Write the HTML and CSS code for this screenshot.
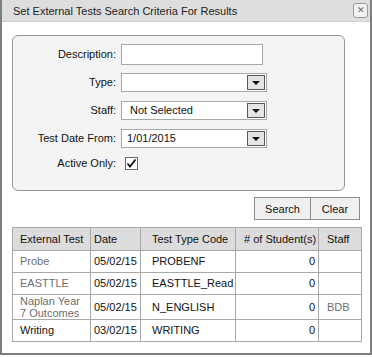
FILE: index.html
```html
<!DOCTYPE html>
<html lang="en">
<head>
    <meta charset="UTF-8">
    <title>Set External Tests Search Criteria For Results</title>
    <link rel="stylesheet" href="styles.css">
</head>
<body>
    <div class="dialog">
        <div class="title-bar">
            <span class="title">Set External Tests Search Criteria For Results</span>
            <span class="close-btn">&#x2715;</span>
        </div>

        <div class="dialog-body">
            <div class="criteria">
                <div class="field-row">
                    <label>Description:</label>
                    <div class="text-box"></div>
                </div>
                <div class="field-row">
                    <label>Type:</label>
                    <div class="combo"><span class="combo-text"></span><span class="combo-btn"><i></i></span></div>
                </div>
                <div class="field-row">
                    <label>Staff:</label>
                    <div class="combo"><span class="combo-text">Not Selected</span><span class="combo-btn"><i></i></span></div>
                </div>
                <div class="field-row">
                    <label>Test Date From:</label>
                    <div class="combo"><span class="combo-text date">1/01/2015</span><span class="combo-btn"><i></i></span></div>
                </div>
                <div class="field-row check-row">
                    <label>Active Only:</label>
                    <span class="check-box">
                        <svg width="11" height="11" viewBox="0 0 11 11"><path d="M1.5 5.5 L4 8.5 L9.5 1.5" fill="none" stroke="#111" stroke-width="1.8"/></svg>
                    </span>
                </div>
            </div>

            <div class="actions">
                <button class="btn btn-search">Search</button>
                <button class="btn btn-clear">Clear</button>
            </div>

            <table class="results">
                <colgroup>
                    <col style="width: 78px">
                    <col style="width: 50px">
                    <col style="width: 95px">
                    <col style="width: 83px">
                    <col style="width: 43px">
                </colgroup>
                <thead>
                    <tr>
                        <th>External Test</th>
                        <th>Date</th>
                        <th>Test Type Code</th>
                        <th># of Student(s)</th>
                        <th>Staff</th>
                    </tr>
                </thead>
                <tbody>
                    <tr class="muted">
                        <td>Probe</td>
                        <td>05/02/15</td>
                        <td>PROBENF</td>
                        <td class="num">0</td>
                        <td></td>
                    </tr>
                    <tr class="muted">
                        <td>EASTTLE</td>
                        <td>05/02/15</td>
                        <td>EASTTLE_Read</td>
                        <td class="num">0</td>
                        <td></td>
                    </tr>
                    <tr class="muted tall">
                        <td>Naplan Year<br>7 Outcomes</td>
                        <td>05/02/15</td>
                        <td>N_ENGLISH</td>
                        <td class="num">0</td>
                        <td class="staff">BDB</td>
                    </tr>
                    <tr>
                        <td>Writing</td>
                        <td>03/02/15</td>
                        <td>WRITING</td>
                        <td class="num">0</td>
                        <td></td>
                    </tr>
                </tbody>
            </table>
        </div>
    </div>
</body>
</html>
```

FILE: styles.css
```css
* {
    margin: 0;
    padding: 0;
    box-sizing: border-box;
}

body {
    background-color: #ffffff;
    font-family: 'Liberation Sans', Arial, sans-serif;
    font-size: 11px;
    color: #111;
}

.dialog {
    width: 372px;
    height: 355px;
    border: 2px solid #7e7e7e;
    border-top: none;
    background-color: #ffffff;
}

.title-bar {
    height: 22px;
    background-color: #dedede;
    display: flex;
    align-items: center;
    justify-content: space-between;
    padding: 0 2px 0 11px;
    border-bottom: 1px solid #d0d0d0;
}

.title {
    color: #222;
}

.close-btn {
    width: 15px;
    height: 15px;
    border: 1px solid #9a9a9a;
    border-radius: 3px;
    background-color: #f2f2f2;
    color: #666;
    font-size: 9px;
    line-height: 13px;
    text-align: center;
}

.dialog-body {
    padding: 13px 9px 0 10px;
}

.criteria {
    width: 333px;
    height: 156px;
    border: 1px solid #979797;
    border-radius: 6px;
    background-color: #f4f4f4;
    padding-top: 8px;
}

.field-row {
    display: flex;
    align-items: center;
    height: 20px;
    margin-bottom: 8px;
}

.field-row label {
    width: 103px;
    text-align: right;
    margin-right: 5px;
}

.text-box {
    width: 142px;
    height: 21px;
    border: 1px solid #a9a9a9;
    background-color: #fff;
}

.combo {
    width: 146px;
    height: 19px;
    border: 1px solid #a9a9a9;
    background-color: #fff;
    display: flex;
    align-items: stretch;
}

.combo-text {
    flex: 1;
    padding-left: 8px;
    line-height: 17px;
}

.combo-text.date {
    padding-left: 5px;
}

.combo-btn {
    width: 18px;
    margin: 1px;
    border: 1px solid #5a5a5a;
    background-color: #e4e4e4;
    display: flex;
    align-items: center;
    justify-content: center;
}

.combo-btn i {
    width: 0;
    height: 0;
    border-left: 4px solid transparent;
    border-right: 4px solid transparent;
    border-top: 4px solid #111;
    margin-top: 1px;
}

.check-row {
    height: 14px;
    margin-top: 6px;
}

.check-box {
    width: 13px;
    height: 13px;
    margin-left: 4px;
    border: 1px solid #6a6a6a;
    background-color: #fff;
    display: flex;
    align-items: center;
    justify-content: center;
}

.actions {
    display: flex;
    justify-content: flex-end;
    margin-top: 6px;
    margin-right: 1px;
}

.btn {
    height: 23px;
    border: 1px solid #8c8c8c;
    background-color: #f0f0f0;
    font-family: inherit;
    font-size: 11px;
    color: #111;
}

.btn-search {
    width: 57px;
}

.btn-clear {
    width: 49px;
    border-left: none;
}

.results {
    width: 349px;
    margin-top: 7px;
    border-collapse: collapse;
    table-layout: fixed;
    border: 1px solid #8c8c8c;
}

.results th,
.results td {
    border: 1px solid #a8a8a8;
    text-align: left;
    font-weight: normal;
    white-space: nowrap;
    line-height: 13px;
    padding: 0 3px 0 7px;
}

.results th {
    height: 23px;
    background-color: #dcdcdc;
}

.results td {
    height: 22px;
}

.results tr.tall td {
    height: 25px;
    line-height: 12px;
}

.results th:nth-child(2),
.results td:nth-child(2) {
    padding-left: 3px;
    padding-right: 1px;
}

.results th:nth-child(3),
.results td:nth-child(3) {
    padding-left: 11px;
}

.results th:nth-child(4) {
    padding-left: 8px;
}

.results th:nth-child(5),
.results td:nth-child(5) {
    padding-left: 8px;
    padding-right: 1px;
}

.results td.num {
    text-align: right;
    padding-right: 3px;
}

.results tr.muted td:first-child,
.results td.staff {
    color: #6e6e6e;
}
```
